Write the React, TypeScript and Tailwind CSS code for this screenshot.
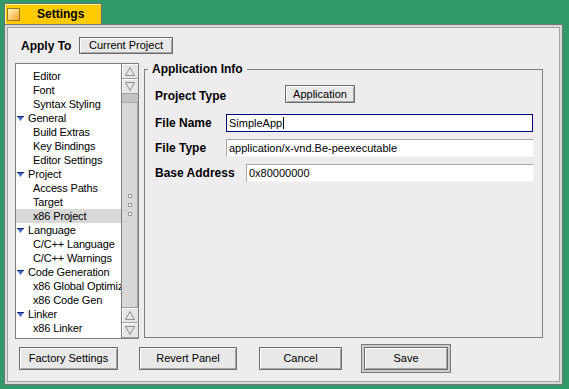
import type { ReactNode } from "react"

type Item = { label: string; group?: boolean; selected?: boolean }

const items: Item[] = [
  { label: "Editor" },
  { label: "Font" },
  { label: "Syntax Styling" },
  { label: "General", group: true },
  { label: "Build Extras" },
  { label: "Key Bindings" },
  { label: "Editor Settings" },
  { label: "Project", group: true },
  { label: "Access Paths" },
  { label: "Target" },
  { label: "x86 Project", selected: true },
  { label: "Language", group: true },
  { label: "C/C++ Language" },
  { label: "C/C++ Warnings" },
  { label: "Code Generation", group: true },
  { label: "x86 Global Optimiz" },
  { label: "x86 Code Gen" },
  { label: "Linker", group: true },
  { label: "x86 Linker" },
]

function Button({ children, className }: { children: ReactNode; className: string }) {
  return (
    <div
      className={`flex items-center justify-center border border-[#6c6c6c] bg-[#e8e8e8] text-[11px] text-black shadow-[inset_1px_1px_0_#ffffff,inset_-1px_-1px_0_#a6a6a6] ${className}`}
    >
      {children}
    </div>
  )
}

function Field({ value, focused, className }: { value: string; focused?: boolean; className: string }) {
  return (
    <div
      className={`flex items-center bg-white pl-[2px] text-[11px] text-black ${
        focused
          ? "border border-[#000080]"
          : "border border-[#a9a9a9] border-b-[#f4f4f4] border-r-[#f4f4f4]"
      } ${className}`}
    >
      {value}
      {focused && <span className="ml-[1px] h-[12px] w-px bg-black" />}
    </div>
  )
}

function Arrow({ up }: { up?: boolean }) {
  return (
    <div className="flex h-[15px] items-center justify-center border-b border-[#a0a0a0] bg-[#e6e6e6] shadow-[inset_1px_1px_0_#ffffff]">
      <svg width="10" height="9" viewBox="0 0 10 9">
        <polygon
          points={up ? "5,0.5 9.5,8.5 0.5,8.5" : "0.5,0.5 9.5,0.5 5,8.5"}
          fill="none"
          stroke="#8e8e8e"
          strokeWidth="1"
        />
      </svg>
    </div>
  )
}

function Disclosure() {
  return (
    <svg width="7" height="5" viewBox="0 0 7 5" className="mr-[4px]">
      <polygon points="0,0 7,0 3.5,5" fill="#3f63c8" />
      <line x1="0" y1="0.5" x2="7" y2="0.5" stroke="#142a78" />
    </svg>
  )
}

function PanelList() {
  return (
    <div className="mt-[1px] ml-[7px] flex h-[276px] w-[124px] border border-[#7e7e7e]">
      <div className="w-[105px] overflow-hidden bg-white pt-[5px] text-[11px] tracking-[-0.15px] text-black">
        {items.map((it) => (
          <div
            key={it.label}
            className={`flex h-[14px] items-center whitespace-nowrap ${it.group ? "pl-[1px]" : "pl-[17px]"} ${
              it.selected ? "bg-[#d8d8d8]" : ""
            }`}
          >
            {it.group && <Disclosure />}
            {it.label}
          </div>
        ))}
      </div>
      <div className="flex w-[17px] flex-col border-l border-[#7e7e7e] bg-[#d6d6d6]">
        <Arrow up />
        <Arrow />
        <div className="h-[8px] bg-[#c2c2c2]" />
        <div className="flex flex-1 flex-col items-center justify-center gap-[5px] border-t border-[#a8a8a8] bg-[#d8d8d8] shadow-[inset_-1px_0_0_#a0a0a0]">
          <div className="h-[4px] w-[4px] border border-[#9c9c9c] bg-white" />
          <div className="h-[4px] w-[4px] border border-[#9c9c9c] bg-white" />
          <div className="h-[4px] w-[4px] border border-[#9c9c9c] bg-white" />
        </div>
        <div className="border-t border-[#a0a0a0]">
          <Arrow up />
        </div>
        <Arrow />
      </div>
    </div>
  )
}

function AppInfo() {
  return (
    <fieldset className="ml-[5px] h-[276px] w-[399px] border border-[#7e7e7e]">
      <legend className="ml-[3px] px-[4px] text-[12px] leading-[14px] font-bold text-black">Application Info</legend>
      <div className="flex flex-col pl-[10px]">
        <div className="mt-[9px] flex items-start">
          <span className="mt-[4px] w-[130px] text-[12px] leading-[14px] font-bold">Project Type</span>
          <Button className="h-[18px] w-[70px]">Application</Button>
        </div>
        <div className="mt-[11px] flex items-center">
          <span className="w-[71px] text-[12px] leading-[14px] font-bold">File Name</span>
          <Field value="SimpleApp" focused className="h-[18px] w-[307px]" />
        </div>
        <div className="mt-[7px] flex items-center">
          <span className="w-[71px] text-[12px] leading-[14px] font-bold">File Type</span>
          <Field value="application/x-vnd.Be-peexecutable" className="h-[18px] w-[308px]" />
        </div>
        <div className="mt-[7px] flex items-center">
          <span className="w-[91px] text-[12px] leading-[14px] font-bold">Base Address</span>
          <Field value="0x80000000" className="h-[18px] w-[288px]" />
        </div>
      </div>
    </fieldset>
  )
}

export default function App() {
  return (
    <div className="h-[389px] w-[569px] overflow-hidden bg-[#319a6b] pt-[3px] pl-[4px] font-['Liberation_Sans',Arial,sans-serif] text-black">
      {/* title tab */}
      <div className="flex h-[21px] w-[98px] items-center border border-b-0 border-[#6a6a6a] bg-[#ffcb00] shadow-[inset_1px_1px_0_#fff3a0]">
        <div className="ml-[2px] h-[13px] w-[13px] border border-[#9a7a20] bg-gradient-to-br from-[#fff7b8] to-[#f2a400]" />
        <span className="ml-[17px] text-[12px] font-bold">Settings</span>
      </div>

      {/* window */}
      <div className="h-[361px] w-[559px] border border-[#767676] bg-[#d9d9d9] p-[2px]">
        <div className="flex h-full flex-col border border-[#a4a4a4] bg-[#efecef]">
          <div className="mt-[9px] flex h-[17px] items-center pl-[13px]">
            <span className="w-[58px] text-[12px] font-bold">Apply To</span>
            <Button className="h-[17px] w-[94px]">Current Project</Button>
          </div>

          <div className="mt-[8px] flex items-start">
            <PanelList />
            <AppInfo />
          </div>

          <div className="mt-[5px] flex h-[29px] items-center pl-[11px]">
            <Button className="h-[23px] w-[99px]">Factory Settings</Button>
            <Button className="ml-[21px] h-[23px] w-[98px]">Revert Panel</Button>
            <Button className="ml-[22px] h-[23px] w-[83px]">Cancel</Button>
            <div className="ml-[19px] border border-[#7a7a7a] bg-[#cdcdcd] p-[2px]">
              <Button className="h-[23px] w-[84px]">Save</Button>
            </div>
          </div>
        </div>
      </div>
    </div>
  )
}
